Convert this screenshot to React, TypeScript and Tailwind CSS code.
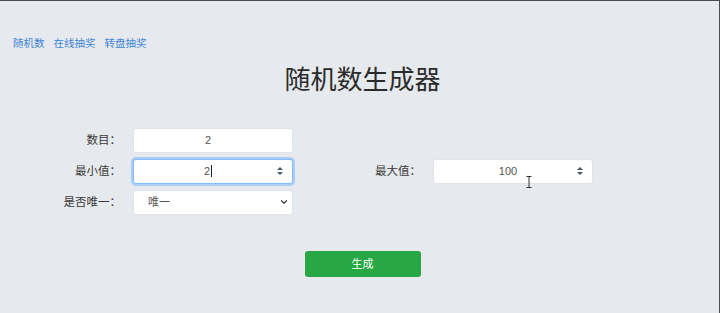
import { ChevronDown } from "lucide-react";

const font = { fontFamily: '"Liberation Sans", "Noto Sans CJK SC", sans-serif' };

function Spinner() {
  return (
    <span className="pointer-events-none absolute right-[9px] top-1/2 -translate-y-1/2 flex flex-col items-center gap-[2px]">
      <span className="block h-0 w-0 border-x-[3px] border-b-[3px] border-x-transparent border-b-gray-600" />
      <span className="block h-0 w-0 border-x-[3px] border-t-[3px] border-x-transparent border-t-gray-600" />
    </span>
  );
}

function NumberField({ value, focused, caret }: { value: string; focused?: boolean; caret?: boolean }) {
  return (
    <div
      className={
        "relative flex h-[25px] w-[160px] items-center justify-center rounded-[3px] bg-white pr-[10px] text-[11px] text-[#555] " +
        (focused ? "border border-[#80bdff] shadow-[0_0_0_2px_rgba(0,123,255,0.25)]" : "border border-[#e0e3e7]")
      }
    >
      <span>{value}</span>
      {caret && <span className="ml-[1px] inline-block h-[12px] w-px bg-[#222]" />}
      <Spinner />
    </div>
  );
}

export default function App() {
  return (
    <div
      className="flex h-[313px] w-[720px] flex-col border-t border-r border-t-[#4a4d52] border-r-[#4a4d52] bg-[#e6e9ed] text-[#333]"
      style={font}
    >
      {/* nav links */}
      <nav className="mt-[35px] flex gap-[9px] pl-[13px] text-[10.5px] text-[#3f86d4]">
        <a href="#">随机数</a>
        <a href="#">在线抽奖</a>
        <a href="#">转盘抽奖</a>
      </nav>

      <h1 className="mt-[10px] text-center text-[26px] leading-[36px] text-[#2b2b2b] pl-[6px]">随机数生成器</h1>

      <div className="mt-[30px] flex flex-col gap-[6px]">
        <div className="flex items-center">
          <label className="w-[121px] text-right text-[11.5px] text-[#3a3a3a]">数目：</label>
          <div className="ml-[12px] flex h-[25px] w-[160px] items-center justify-center rounded-[3px] border border-[#e0e3e7] bg-white pr-[10px] text-[11px] text-[#555]">
            2
          </div>
        </div>

        <div className="flex items-center">
          <label className="w-[121px] text-right text-[11.5px] text-[#3a3a3a]">最小值：</label>
          <div className="ml-[12px]">
            <NumberField value="2" focused caret />
          </div>
          <label className="w-[128px] text-right text-[11.5px] text-[#3a3a3a]">最大值：</label>
          <div className="relative ml-[12px]">
            <NumberField value="100" />
            {/* mouse I-beam */}
            <svg className="absolute left-[93px] top-[17px]" width="6" height="12" viewBox="0 0 6 12">
              <path d="M0.5 0.5h5M3 0.5v11M0.5 11.5h5" stroke="#333" strokeWidth="1" fill="none" />
            </svg>
          </div>
        </div>

        <div className="flex items-center">
          <label className="w-[121px] text-right text-[11.5px] text-[#3a3a3a]">是否唯一：</label>
          <div className="relative ml-[12px] flex h-[25px] w-[160px] items-center rounded-[3px] border border-[#e0e3e7] bg-white pl-[14px] text-[11px] text-[#555]">
            唯一
            <ChevronDown className="absolute right-[3px] top-1/2 h-[10px] w-[10px] -translate-y-1/2 text-[#444]" strokeWidth={3} />
          </div>
        </div>
      </div>

      <div className="mt-[36px] flex justify-center pl-[6px]">
        <button className="h-[26px] w-[116px] rounded-[3px] bg-[#28a745] text-[11px] text-white">生成</button>
      </div>
    </div>
  );
}
